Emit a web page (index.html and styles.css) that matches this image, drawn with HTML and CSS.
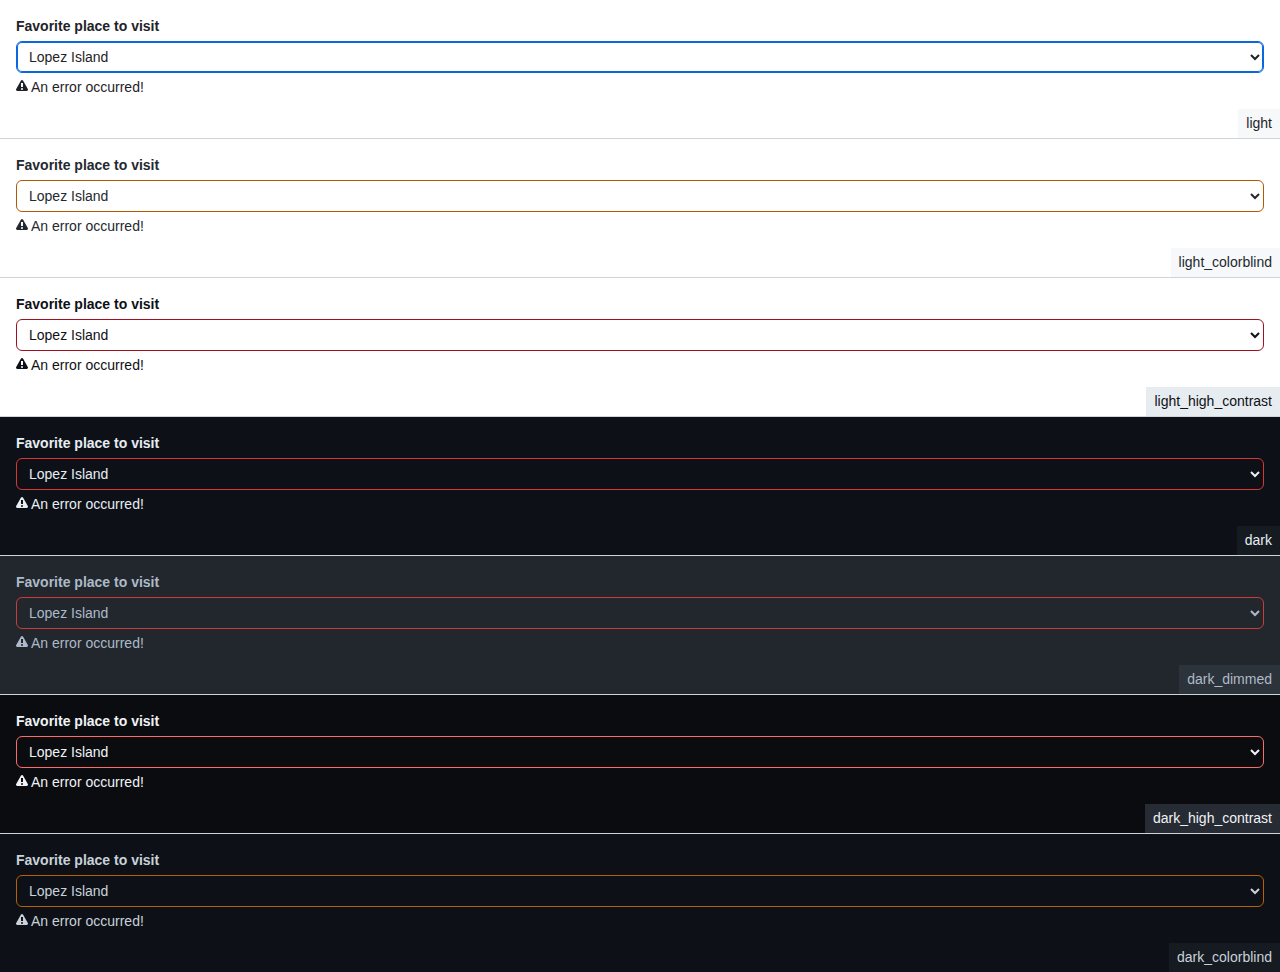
FILE: index.html
```html
<!DOCTYPE html>
<html lang="en">
<head>
<meta charset="utf-8">
<meta name="viewport" content="width=device-width, initial-scale=1">
<title>Select validation across themes</title>
<link rel="stylesheet" href="styles.css">
</head>
<body>
<svg class="sprite" aria-hidden="true">
  <symbol id="alert" viewBox="0 0 12 12"><path d="M4.855.708c.5-.896 1.79-.896 2.29 0l4.675 8.351a1.312 1.312 0 0 1-1.146 1.954H1.33A1.313 1.313 0 0 1 .183 9.058ZM7 7V3H5v4Zm-1 3a1 1 0 1 0 0-2 1 1 0 0 0 0 2Z"/></symbol>
</svg>
<main>
  <section class="theme light">
    <div class="field">
      <label for="place-1">Favorite place to visit</label>
      <select id="place-1" class="select focused" aria-describedby="error-1"><option>Lopez Island</option></select>
      <div class="error" id="error-1"><svg class="icon" aria-hidden="true"><use href="#alert"/></svg><span>An error occurred!</span></div>
    </div>
    <div class="tag">light</div>
  </section>
  <section class="theme light-colorblind">
    <div class="field">
      <label for="place-2">Favorite place to visit</label>
      <select id="place-2" class="select" aria-describedby="error-2"><option>Lopez Island</option></select>
      <div class="error" id="error-2"><svg class="icon" aria-hidden="true"><use href="#alert"/></svg><span>An error occurred!</span></div>
    </div>
    <div class="tag">light_colorblind</div>
  </section>
  <section class="theme light-high-contrast">
    <div class="field">
      <label for="place-3">Favorite place to visit</label>
      <select id="place-3" class="select" aria-describedby="error-3"><option>Lopez Island</option></select>
      <div class="error" id="error-3"><svg class="icon" aria-hidden="true"><use href="#alert"/></svg><span>An error occurred!</span></div>
    </div>
    <div class="tag">light_high_contrast</div>
  </section>
  <section class="theme dark">
    <div class="field">
      <label for="place-4">Favorite place to visit</label>
      <select id="place-4" class="select" aria-describedby="error-4"><option>Lopez Island</option></select>
      <div class="error" id="error-4"><svg class="icon" aria-hidden="true"><use href="#alert"/></svg><span>An error occurred!</span></div>
    </div>
    <div class="tag">dark</div>
  </section>
  <section class="theme dark-dimmed">
    <div class="field">
      <label for="place-5">Favorite place to visit</label>
      <select id="place-5" class="select" aria-describedby="error-5"><option>Lopez Island</option></select>
      <div class="error" id="error-5"><svg class="icon" aria-hidden="true"><use href="#alert"/></svg><span>An error occurred!</span></div>
    </div>
    <div class="tag">dark_dimmed</div>
  </section>
  <section class="theme dark-high-contrast">
    <div class="field">
      <label for="place-6">Favorite place to visit</label>
      <select id="place-6" class="select" aria-describedby="error-6"><option>Lopez Island</option></select>
      <div class="error" id="error-6"><svg class="icon" aria-hidden="true"><use href="#alert"/></svg><span>An error occurred!</span></div>
    </div>
    <div class="tag">dark_high_contrast</div>
  </section>
  <section class="theme dark-colorblind">
    <div class="field">
      <label for="place-7">Favorite place to visit</label>
      <select id="place-7" class="select" aria-describedby="error-7"><option>Lopez Island</option></select>
      <div class="error" id="error-7"><svg class="icon" aria-hidden="true"><use href="#alert"/></svg><span>An error occurred!</span></div>
    </div>
    <div class="tag">dark_colorblind</div>
  </section>
</main>
</body>
</html>
```
FILE: styles.css
```css
* { box-sizing: border-box; }

body {
  margin: 0;
  font-family: "Liberation Sans", Arial, sans-serif;
  font-size: 14px;
  line-height: 21px;
}

.sprite { display: none; }

.theme {
  display: flex;
  flex-direction: column;
  gap: 11px;
  padding-top: 16px;
  color: var(--fg);
  background: var(--bg);
  border-bottom: 1px solid #d0d4d8;
}
.theme:last-child { border-bottom: 0; }

.field {
  display: flex;
  flex-direction: column;
  gap: 4px;
  padding: 0 16px;
}
.field label {
  align-self: flex-start;
  font-weight: 700;
}

.select {
  width: 100%;
  height: 32px;
  margin: 0;
  padding: 5px 8px;
  font: inherit;
  line-height: 20px;
  color: var(--fg);
  background-color: var(--bg);
  border: 1px solid var(--danger);
  border-radius: 6px;
}
.select.focused,
.select:focus {
  border-color: #0969da;
  outline: none;
  box-shadow: inset 0 0 0 1px #0969da;
}

.error {
  display: flex;
  align-items: flex-start;
  gap: 3px;
}
.icon {
  width: 12px;
  height: 12px;
  margin-top: 3px;
  fill: currentColor;
}

.tag {
  align-self: flex-end;
  padding: 4px 8px;
  background: var(--tag);
}

.light { --bg: #ffffff; --fg: #1f2328; --danger: #cf222e; --tag: #f6f8fa; }
.light-colorblind { --bg: #ffffff; --fg: #24292f; --danger: #b35900; --tag: #f6f8fa; }
.light-high-contrast { --bg: #ffffff; --fg: #0e1116; --danger: #a0111f; --tag: #e7ecf0; }
.dark { --bg: #0d1117; --fg: #e6edf3; --danger: #da3633; --tag: #161b22; }
.dark-dimmed { --bg: #22272e; --fg: #adbac7; --danger: #c93c37; --tag: #2d333b; }
.dark-high-contrast { --bg: #0a0c10; --fg: #f0f3f6; --danger: #ff6a69; --tag: #272b33; }
.dark-colorblind { --bg: #0d1117; --fg: #c9d1d9; --danger: #b76100; --tag: #161b22; }
```
